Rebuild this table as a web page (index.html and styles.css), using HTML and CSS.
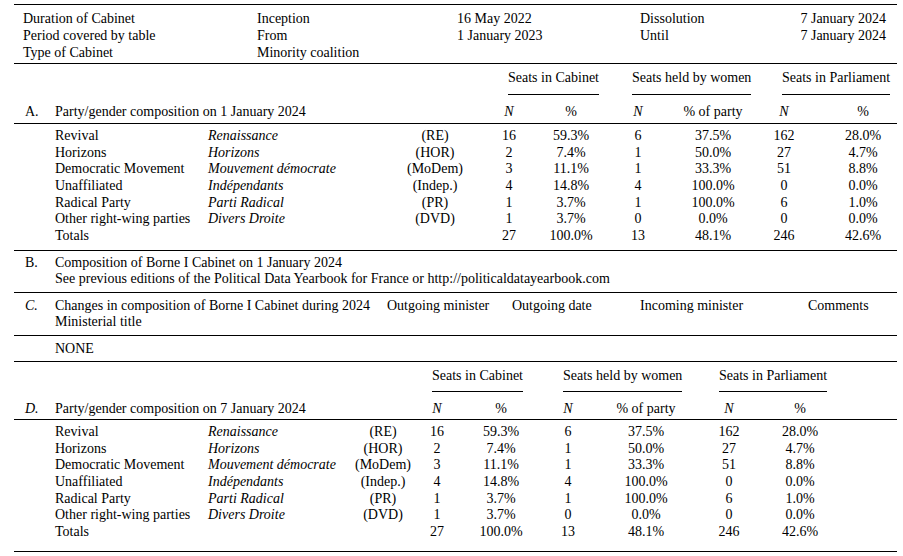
FILE: index.html
```html
<!DOCTYPE html>
<html lang="en">
<head>
<meta charset="utf-8">
<title>Borne I Cabinet</title>
<link rel="stylesheet" href="styles.css">
</head>
<body>
<div class="doc">
  <div class="meta">
    <span>Duration of Cabinet</span><span>Inception</span><span>16 May 2022</span><span>Dissolution</span><span class="r">7 January 2024</span>
    <span>Period covered by table</span><span>From</span><span>1 January 2023</span><span>Until</span><span class="r">7 January 2024</span>
    <span>Type of Cabinet</span><span>Minority coalition</span><span></span><span></span><span></span>
  </div>

  <div class="sec">
    <table class="comp comp-a">
      <colgroup>
        <col class="w41"><col class="w153"><col class="w190"><col class="w74"><col class="w74"><col class="w50"><col class="w84"><col class="w66"><col class="w76"><col class="w75">
      </colgroup>
      <thead>
        <tr class="grp">
          <td colspan="4"></td>
          <td colspan="2" class="gh"><span class="ul">Seats in Cabinet</span></td>
          <td colspan="2" class="gh"><span class="ul">Seats held by women</span></td>
          <td colspan="2" class="gh"><span class="ul">Seats in Parliament</span></td>
        </tr>
        <tr class="sub">
          <td class="let">A.</td>
          <td colspan="3">Party/gender composition on 1 January 2024</td>
          <td class="c"><i>N</i></td><td class="c">%</td>
          <td class="c"><i>N</i></td><td class="c">% of party</td>
          <td class="c"><i>N</i></td><td class="c last">%</td>
        </tr>
      </thead>
      <tbody class="rows">
        <tr><td></td><td>Revival</td><td><i>Renaissance</i></td><td class="c">(RE)</td><td class="c">16</td><td class="c">59.3%</td><td class="c">6</td><td class="c">37.5%</td><td class="c">162</td><td class="c last">28.0%</td></tr>
        <tr><td></td><td>Horizons</td><td><i>Horizons</i></td><td class="c">(HOR)</td><td class="c">2</td><td class="c">7.4%</td><td class="c">1</td><td class="c">50.0%</td><td class="c">27</td><td class="c last">4.7%</td></tr>
        <tr><td></td><td>Democratic Movement</td><td><i>Mouvement démocrate</i></td><td class="c">(MoDem)</td><td class="c">3</td><td class="c">11.1%</td><td class="c">1</td><td class="c">33.3%</td><td class="c">51</td><td class="c last">8.8%</td></tr>
        <tr><td></td><td>Unaffiliated</td><td><i>Indépendants</i></td><td class="c">(Indep.)</td><td class="c">4</td><td class="c">14.8%</td><td class="c">4</td><td class="c">100.0%</td><td class="c">0</td><td class="c last">0.0%</td></tr>
        <tr><td></td><td>Radical Party</td><td><i>Parti Radical</i></td><td class="c">(PR)</td><td class="c">1</td><td class="c">3.7%</td><td class="c">1</td><td class="c">100.0%</td><td class="c">6</td><td class="c last">1.0%</td></tr>
        <tr><td></td><td>Other right-wing parties</td><td><i>Divers Droite</i></td><td class="c">(DVD)</td><td class="c">1</td><td class="c">3.7%</td><td class="c">0</td><td class="c">0.0%</td><td class="c">0</td><td class="c last">0.0%</td></tr>
        <tr><td></td><td>Totals</td><td></td><td></td><td class="c">27</td><td class="c">100.0%</td><td class="c">13</td><td class="c">48.1%</td><td class="c">246</td><td class="c last">42.6%</td></tr>
      </tbody>
    </table>
  </div>

  <div class="sec blk blk-b">
    <span class="let">B.</span><span>Composition of Borne I Cabinet on 1 January 2024</span>
    <span></span><span>See previous editions of the Political Data Yearbook for France or http://politicaldatayearbook.com</span>
  </div>

  <div class="sec blk-c">
    <span class="let"><i>C.</i></span><span>Changes in composition of Borne I Cabinet during 2024</span><span>Outgoing minister</span><span>Outgoing date</span><span>Incoming minister</span><span>Comments</span>
    <span></span><span>Ministerial title</span><span></span><span></span><span></span><span></span>
  </div>

  <div class="sec blk blk-none">
    <span></span><span>NONE</span>
  </div>

  <div class="sec">
    <table class="comp comp-d">
      <colgroup>
        <col class="w41"><col class="w153"><col class="w142"><col class="w66"><col class="w42"><col class="w86"><col class="w48"><col class="w108"><col class="w58"><col class="w84"><col class="w55">
      </colgroup>
      <thead>
        <tr class="grp">
          <td colspan="4"></td>
          <td colspan="2" class="gh"><span class="ul">Seats in Cabinet</span></td>
          <td colspan="2" class="gh"><span class="ul">Seats held by women</span></td>
          <td colspan="2" class="gh"><span class="ul">Seats in Parliament</span></td>
          <td></td>
        </tr>
        <tr class="sub">
          <td class="let"><i>D.</i></td>
          <td colspan="3">Party/gender composition on 7 January 2024</td>
          <td class="c"><i>N</i></td><td class="c">%</td>
          <td class="c"><i>N</i></td><td class="c">% of party</td>
          <td class="c"><i>N</i></td><td class="c">%</td><td></td>
        </tr>
      </thead>
      <tbody class="rows">
        <tr><td></td><td>Revival</td><td><i>Renaissance</i></td><td class="c">(RE)</td><td class="c">16</td><td class="c">59.3%</td><td class="c">6</td><td class="c">37.5%</td><td class="c">162</td><td class="c">28.0%</td><td></td></tr>
        <tr><td></td><td>Horizons</td><td><i>Horizons</i></td><td class="c">(HOR)</td><td class="c">2</td><td class="c">7.4%</td><td class="c">1</td><td class="c">50.0%</td><td class="c">27</td><td class="c">4.7%</td><td></td></tr>
        <tr><td></td><td>Democratic Movement</td><td><i>Mouvement démocrate</i></td><td class="c">(MoDem)</td><td class="c">3</td><td class="c">11.1%</td><td class="c">1</td><td class="c">33.3%</td><td class="c">51</td><td class="c">8.8%</td><td></td></tr>
        <tr><td></td><td>Unaffiliated</td><td><i>Indépendants</i></td><td class="c">(Indep.)</td><td class="c">4</td><td class="c">14.8%</td><td class="c">4</td><td class="c">100.0%</td><td class="c">0</td><td class="c">0.0%</td><td></td></tr>
        <tr><td></td><td>Radical Party</td><td><i>Parti Radical</i></td><td class="c">(PR)</td><td class="c">1</td><td class="c">3.7%</td><td class="c">1</td><td class="c">100.0%</td><td class="c">6</td><td class="c">1.0%</td><td></td></tr>
        <tr><td></td><td>Other right-wing parties</td><td><i>Divers Droite</i></td><td class="c">(DVD)</td><td class="c">1</td><td class="c">3.7%</td><td class="c">0</td><td class="c">0.0%</td><td class="c">0</td><td class="c">0.0%</td><td></td></tr>
        <tr><td></td><td>Totals</td><td></td><td></td><td class="c">27</td><td class="c">100.0%</td><td class="c">13</td><td class="c">48.1%</td><td class="c">246</td><td class="c">42.6%</td><td></td></tr>
      </tbody>
    </table>
  </div>
</div>
</body>
</html>
```

FILE: styles.css
```css
html, body {
  margin: 0;
  padding: 0;
  background: #fff;
}

body {
  font-family: "Liberation Serif", "Times New Roman", serif;
  font-size: 14px;
  line-height: 16.67px;
  color: #000;
}

.doc {
  width: 883px;
  margin: 4px 0 0 14px;
  border-top: 1px solid #000;
}

.meta {
  display: grid;
  grid-template-columns: 234px 200px 183px 1fr auto;
  padding: 5px 11px 2px 9px;
  line-height: 17px;
  border-bottom: 1px solid #000;
  white-space: nowrap;
}

.meta .r {
  text-align: right;
}

.sec {
  border-bottom: 1px solid #000;
}

table.comp {
  width: 883px;
  border-collapse: collapse;
  table-layout: fixed;
}

table.comp td {
  padding: 0;
  white-space: nowrap;
  vertical-align: top;
}

.w41 { width: 41px; }
.w42 { width: 42px; }
.w48 { width: 48px; }
.w50 { width: 50px; }
.w55 { width: 55px; }
.w58 { width: 58px; }
.w66 { width: 66px; }
.w74 { width: 74px; }
.w75 { width: 75px; }
.w76 { width: 76px; }
.w84 { width: 84px; }
.w86 { width: 86px; }
.w108 { width: 108px; }
.w142 { width: 142px; }
.w153 { width: 153px; }
.w190 { width: 190px; }

.c {
  text-align: center;
}

.let {
  padding-left: 11px;
}

table.comp td.let {
  padding-left: 11px;
}

.grp td {
  line-height: 17px;
}

table.comp .grp td.gh {
  padding-top: 5px;
}

.comp-a .grp td.gh {
  padding-left: 36px;
}

.comp-d .grp td.gh {
  padding-top: 4px;
  padding-left: 19px;
}

.comp-d .grp td.gh:nth-child(2) {
  padding-left: 16px;
}

.ul {
  display: block;
  width: max-content;
  padding-bottom: 8px;
  border-bottom: 1px solid #000;
}

.comp-d .ul {
  padding-bottom: 7px;
}

table.comp .sub td {
  line-height: 17px;
  padding-top: 8px;
  padding-bottom: 3px;
  border-bottom: 1px solid #000;
}

table.comp-d .sub td {
  padding-bottom: 2px;
}

.comp-a td.last {
  padding-left: 7px;
}

table.comp .rows tr:first-child td {
  padding-top: 4px;
}

table.comp-a .rows tr:last-child td {
  padding-bottom: 5px;
}

table.comp-d .rows tr:last-child td {
  padding-bottom: 10px;
}

.blk {
  display: grid;
  grid-template-columns: 41px 1fr;
  white-space: nowrap;
}

.blk-b {
  padding: 4px 0 3.5px;
}

.blk-c {
  display: grid;
  grid-template-columns: 41px 332px 125px 128px 168px 1fr;
  padding: 5px 0 4px;
  white-space: nowrap;
}

.blk-none {
  padding: 5px 0 3.5px;
}
```
